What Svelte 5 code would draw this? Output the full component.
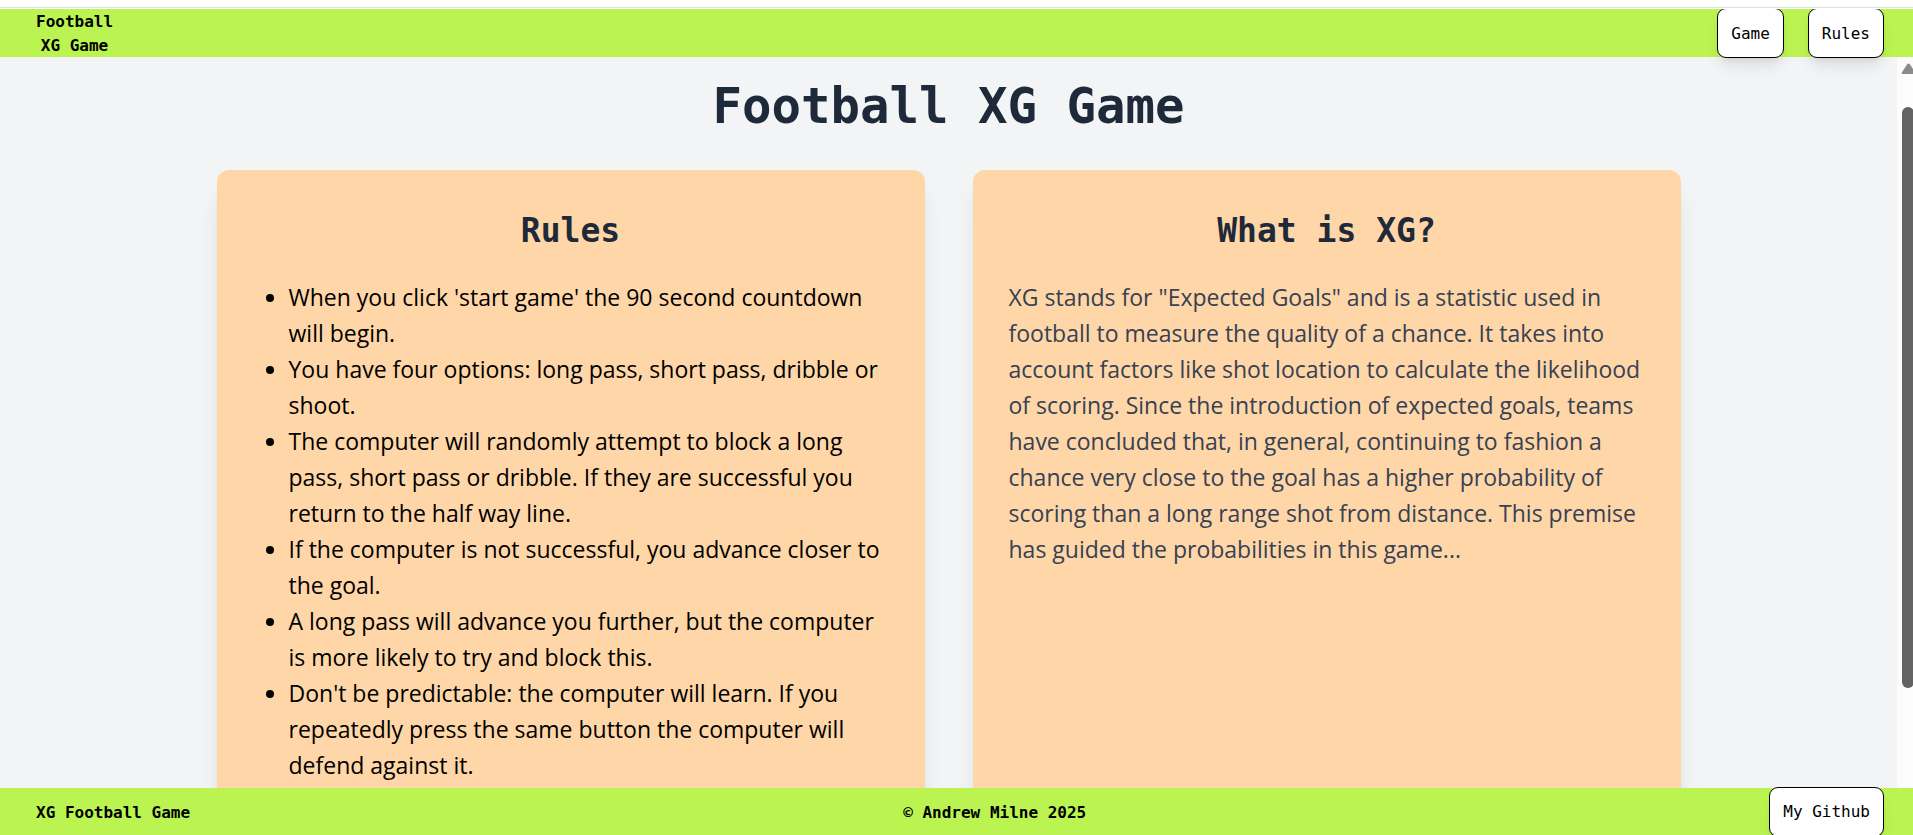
<script>
  const rules = [
    "When you click 'start game' the 90 second countdown will begin.",
    'You have four options: long pass, short pass, dribble or shoot.',
    'The computer will randomly attempt to block a long pass, short pass or dribble. If they are successful you return to the half way line.',
    'If the computer is not successful, you advance closer to the goal.',
    'A long pass will advance you further, but the computer is more likely to try and block this.',
    "Don't be predictable: the computer will learn. If you repeatedly press the same button the computer will defend against it."
  ];
</script>

<div class="app">
  <div class="strip"></div>
  <header>
    <strong class="brand">Football<br />XG Game</strong>
    <nav>
      <button type="button">Game</button>
      <button type="button">Rules</button>
    </nav>
  </header>

  <div class="view">
    <main>
      <h1>Football XG Game</h1>
      <div class="cards">
        <section>
          <h2>Rules</h2>
          <ul>
            {#each rules as rule}
              <li>{rule}</li>
            {/each}
          </ul>
        </section>
        <section>
          <h2>What is XG?</h2>
          <p>
            XG stands for "Expected Goals" and is a statistic used in football to measure the quality
            of a chance. It takes into account factors like shot location to calculate the likelihood
            of scoring. Since the introduction of expected goals, teams have concluded that, in
            general, continuing to fashion a chance very close to the goal has a higher probability of
            scoring than a long range shot from distance. This premise has guided the probabilities in
            this game...
          </p>
        </section>
      </div>
    </main>
    <div class="scrollbar" aria-hidden="true">
      <svg width="16" height="12" viewBox="0 0 16 12">
        <path d="M5.8 11 Q4 11 4.8 9.4 L10 1.6 Q11.5 -0.4 13 1.6 L18.2 9.4 Q19 11 17.2 11 Z" fill="#8b8b8b" />
      </svg>
      <div class="thumb"></div>
    </div>
  </div>

  <footer>
    <strong class="name">XG Football Game</strong>
    <strong>© Andrew Milne 2025</strong>
    <button type="button">My Github</button>
  </footer>
</div>

<style>
  :global(body) {
    margin: 0;
  }

  .app {
    display: flex;
    flex-direction: column;
    height: 100vh;
    overflow: hidden;
    background: #f3f4f6;
    color: #000;
    font: 16px/24px 'DejaVu Sans Mono', monospace;
  }

  .strip {
    position: relative;
    z-index: 2;
    flex: none;
    box-sizing: border-box;
    height: 9px;
    background: linear-gradient(#dfe2e4, #dfe2e4) 0 7px / 100% 1px no-repeat #fff;
  }

  header,
  footer {
    position: relative;
    z-index: 1;
    flex: none;
    display: flex;
    align-items: center;
    justify-content: space-between;
    height: 48px;
    padding: 0 29px 0 36px;
    background: #bbf451;
  }

  footer {
    height: 47px;
  }

  strong {
    padding-top: 2px;
  }

  .brand {
    text-align: center;
  }

  .name {
    margin-right: 30px;
  }

  nav {
    display: flex;
    gap: 24px;
  }

  button {
    height: 50px;
    padding: 1px 13px 0;
    border: 1px solid #000;
    border-radius: 9px;
    background: #fff;
    color: #000;
    font: inherit;
    box-shadow: 0 10px 15px -3px rgb(0 0 0 / 0.1), 0 4px 6px -4px rgb(0 0 0 / 0.1);
    cursor: pointer;
  }

  .view {
    flex: 1;
    display: flex;
    min-height: 0;
  }

  main {
    flex: 1;
    display: flex;
    flex-direction: column;
    overflow: hidden;
    padding-top: 20px;
  }

  h1,
  h2 {
    margin: 0;
    color: #1e2939;
    text-align: center;
  }

  h1 {
    margin-bottom: 33px;
    font-size: 49px;
    line-height: 60px;
  }

  .cards {
    flex: none;
    display: grid;
    grid-template-columns: 1fr 1fr;
    gap: 48px;
    box-sizing: border-box;
    width: 100%;
    max-width: 1464px;
    margin: 0 auto;
  }

  section {
    padding: 36px;
    border-radius: 12px;
    background: #ffd6a7;
    box-shadow: 0 20px 25px -5px rgb(0 0 0 / 0.1), 0 8px 10px -6px rgb(0 0 0 / 0.1);
  }

  h2 {
    margin-bottom: 23px;
    font-size: 33px;
    line-height: 50px;
  }

  ul,
  p {
    margin: 0;
    font: 23px/36px 'Open Sans', sans-serif;
  }

  ul {
    padding-left: 36px;
  }

  p {
    color: #364153;
  }

  .scrollbar {
    flex: none;
    display: flex;
    flex-direction: column;
    width: 16px;
    overflow: hidden;
    background: #fcfcfc;
  }

  .scrollbar svg {
    flex: none;
    margin: 6px 0 32px;
  }

  .thumb {
    flex: 1;
    width: 12px;
    margin: 0 0 100px 5px;
    border-radius: 6px;
    background: #636363;
  }
</style>
